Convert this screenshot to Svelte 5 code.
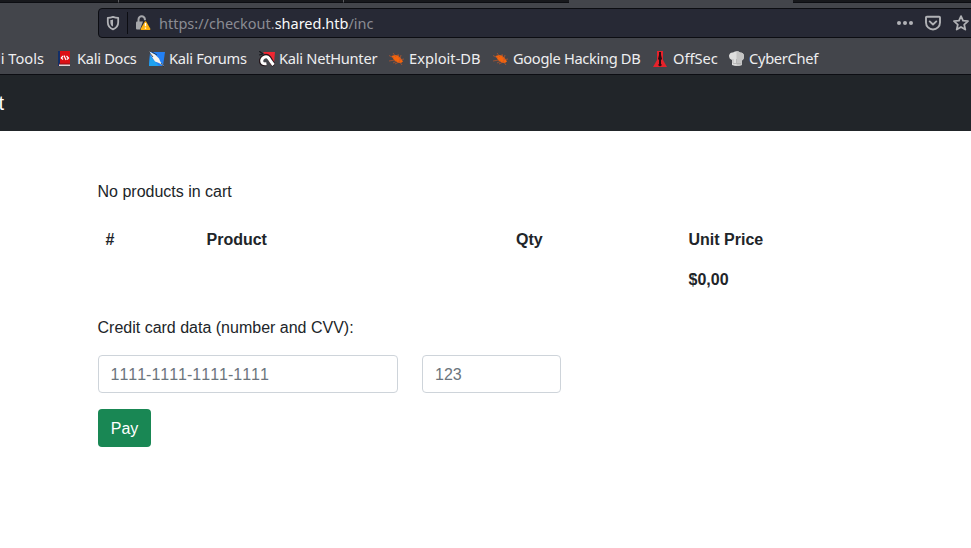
<script>
  const bookmarks = [
    { icon: 'docs', label: 'Kali Docs', width: 92, spacing: -0.3 },
    { icon: 'forums', label: 'Kali Forums', width: 110, spacing: -0.3 },
    { icon: 'hunter', label: 'Kali NetHunter', width: 130, spacing: -0.27 },
    { icon: 'bug', label: 'Exploit-DB', width: 104, spacing: 0 },
    { icon: 'bug', label: 'Google Hacking DB', width: 160, spacing: -0.34 },
    { icon: 'offsec', label: 'OffSec', width: 76, spacing: 0 },
    { icon: 'chef', label: 'CyberChef', width: 100, spacing: -0.3 }
  ];
</script>

<div class="window">
  <div class="tabs">
    <span class="tab first"></span>
    <span class="tab second"></span>
    <span class="tab third"></span>
    <span class="tab active"></span>
    <span class="tab rest"></span>
  </div>

  <div class="toolbar">
    <div class="urlbar">
      <svg class="shield" width="16" height="16" viewBox="0 0 16 16">
        <path d="M8 1.900C6.300 2.500 4.600 2.800 2.800 2.800v4.500c0 3.300 1.800 5.800 5.200 7 3.400-1.200 5.200-3.700 5.200-7V2.800C11.400 2.800 9.700 2.500 8 1.900Z" fill="none" stroke="#b1b2b6" stroke-width="1.800" stroke-linejoin="round" />
        <path d="M8 4.600v7C6.200 10.700 5.400 9.300 5.400 7.400V5.100Q6.800 5.100 8 4.600Z" fill="#b1b2b6" />
      </svg>
      <span class="divider"></span>
      <svg class="lock" width="16" height="16" viewBox="0 0 16 16">
        <path d="M3.500 8V4.500a3.200 3.200 0 0 1 6.400 0v.7" fill="none" stroke="#a6a7ab" stroke-width="2" />
        <path d="M2 6.500h6L5 14.500H2q-1 0-1-1v-6q0-1 1-1Z" fill="#a6a7ab" />
        <path d="M10.500 7 14.700 14.200H6.300Z" fill="#ffb310" stroke="#ffb310" stroke-width="1.500" stroke-linejoin="round" />
        <path d="M10.500 8v3.300M10.500 12.500v1.300" stroke="#fff" stroke-width="1.400" />
      </svg>
      <span class="url">https://checkout.<b>shared.htb</b>/inc</span>
      <svg class="dots" width="16" height="16" viewBox="0 0 16 16" fill="#b1b2b6">
        <circle cx="2" cy="8" r="2" /><circle cx="8" cy="8" r="2" /><circle cx="14" cy="8" r="2" />
      </svg>
      <svg class="pocket" width="16" height="16" viewBox="0 0 16 16" fill="none" stroke="#b1b2b6" stroke-width="1.900" stroke-linejoin="round" stroke-linecap="round">
        <path d="M1.900 1.700h12.200q.9 0 .9 .9v4.900a7 7 0 0 1-14 0V2.600q0-.9 .9-.9Z" />
        <path d="M4.700 6.400 8 9.500l3.300-3.100" />
      </svg>
      <svg class="star" width="16" height="16" viewBox="0 0 16 16" fill="none" stroke="#b1b2b6" stroke-width="1.800" stroke-linejoin="round">
        <path d="m8 1.100 2 4.600 5 .5-3.800 3.400 1.100 5L8 12l-4.300 2.600 1.100-5L1 6.200l5-.5Z" />
      </svg>
    </div>
  </div>

  <div class="bookmarks">
    <span class="cut">li Tools</span>
    {#each bookmarks as item}
      <span class="bookmark" style:width="{item.width}px">
        <svg width="16" height="16" viewBox="0 0 16 16">
          {#if item.icon === 'docs'}
            <path d="M1 0h2v15H1Z" fill="#132f68" />
            <path d="M3 0h10v13H3Z" fill="#dc1015" />
            <path d="M2 13h11v2H2Z" fill="#e4d7d8" />
            <path d="M2 13h11" stroke="#8b1018" />
            <path d="M6 5 4.300 7 6 8.500M9.500 5 11.500 7 10 8.500M7 4.500 9 9" fill="none" stroke="#fff" stroke-width="1.200" />
          {:else if item.icon === 'forums'}
            <path d="M1 1h15l-2 14H0Z" fill="#2380f4" />
            <path d="M1 5 10 15H0Z" fill="#20a2ee" />
            <path d="m0 .5 6 3 4 4 1.500 3.500 4 4.500-5.500-3.500-4-1.500-3-4.500Z" fill="#f4f3ed" />
            <path d="m0 1 4 5M3 1l5 3M12 12l3 4" fill="none" stroke="#252b34" stroke-width=".8" />
          {:else if item.icon === 'hunter'}
            <path d="M4 1h12l-1 11-3 2L8 6Z" fill="#f02732" />
            <path d="M0 0 4 3M0 4l4-1" stroke="#17191e" stroke-width="1.200" />
            <path d="M7.500 13C1 14 .5 9 4.500 6c3-2.500 6 0 7 3l3.500 5.500" fill="none" stroke="#25171c" stroke-width="4.200" />
            <path d="M7.500 12.700C2 13.500 1.500 9 4.800 6.500c3-2 5 0 6.200 2.700l3.500 4.800" fill="none" stroke="#fff" stroke-width="3" />
          {:else if item.icon === 'bug'}
            <path d="M2.500 5 6 4l3 .5 3 3 2 3-2 1.500-3-.3-4-2.700Z" fill="#f4640c" />
            <path d="M0 4.500 5 7M0 10l6-1M4 2l3 4M9 3l1 4M12 4l-1 4M15 8l-5 1M13 14l-3-4M4 12l4-2M6 13l4-2" stroke="#bd582b" stroke-width=".7" />
          {:else if item.icon === 'offsec'}
            <path d="M4 0h6v9l4 7H0l4-7Z" fill="#e5222b" />
            <path d="M6 1h2v3l1 4-1 1v4l1 1-2 1.500L5 14l1-1V9L5 8l1-4Z" fill="#250d10" />
          {:else}
            <path d="M3 14V9Q0 8 0 4.500 1 1 4 1.500 8-1 11 1.500q4 0 4 4 0 3-2 4V14Q8 16 3 14Z" fill="#dedede" />
            <path d="M7.500 0Q10 0 11 1.500q4 0 4 4 0 3-2 4V14l-5.500 1Z" fill="#c4c4c4" />
            <path d="M4 12.500h8M4 8v4M7.500 8v4" stroke="#aaa" stroke-width=".7" />
          {/if}
        </svg>
        <span class="label" style:letter-spacing="{item.spacing}px">{item.label}</span>
      </span>
    {/each}
  </div>

  <div class="navbar">t</div>

  <main>
    <p>No products in cart</p>
    <table>
      <thead>
        <tr><th>#</th><th>Product</th><th>Qty</th><th>Unit Price</th></tr>
      </thead>
      <tbody>
        <tr><th></th><th></th><th></th><th>$0,00</th></tr>
      </tbody>
    </table>
    <p class="card-label">Credit card data (number and CVV):</p>
    <div class="fields">
      <input class="number" placeholder="1111-1111-1111-1111" aria-label="Number" />
      <input class="cvv" placeholder="123" aria-label="CVV" />
    </div>
    <button>Pay</button>
  </main>
</div>

<style>
  :global(body) { margin: 0; background: #fff; }
  .window, .window * { box-sizing: border-box; }
  .window { width: 971px; height: 548px; overflow: hidden; background: #fff; font: 16px/24px "Liberation Sans", Arial, sans-serif; color: #212529; }
  svg { display: block; flex: none; }
  .tabs { display: flex; height: 3px; background: #17181c; }
  .tab { border-bottom: 1px solid #0c0d12; }
  .first { width: 119px; border-right: 1px solid #5b5c60; }
  .second { width: 225px; border-right: 1px solid #5b5c60; }
  .third { width: 225px; }
  .active { width: 224px; background: #43454b; border: 0; }
  .rest { flex: 1; }
  .toolbar { height: 35px; padding: 5px 0 0 98px; background: #43454b; }
  .urlbar { display: flex; align-items: center; width: 900px; height: 30px; border: 1px solid #0c0d12; border-radius: 4px; background: #272935; }
  .shield { margin-left: 6px; }
  .divider { width: 1px; height: 22px; margin: 0 7px 0 6px; background: #0c0d12; }
  .url { width: 738px; margin-left: 8px; font: 14.500px/20px "Noto Sans", sans-serif; color: #8b8c93; white-space: nowrap; }
  .url b { font-weight: 400; color: #f9f9fa; }
  .pocket, .star { margin-left: 12px; }
  .bookmarks { display: flex; align-items: center; height: 37px; padding-top: 5px; background: #43454b; border-bottom: 1px solid #0c0d12; font: 14.670px/20px "Noto Sans", sans-serif; color: #eeeef0; white-space: nowrap; }
  .cut { display: flex; flex: none; justify-content: flex-end; width: 57px; padding: 0 13px 2px 0; }
  .bookmark { display: flex; align-items: center; gap: 4px; flex: none; }
  .label { padding-bottom: 2px; }
  .navbar { height: 56px; padding-top: 16px; background: #212529; color: #fff; font-size: 20px; text-indent: -1.500px; }
  main { padding: 49px 98px 0; }
  p { margin: 0 0 0 -.5px; }
  table { width: 775.500px; margin: 16px 0 0 -.5px; border-collapse: collapse; table-layout: fixed; text-align: left; }
  th { height: 40px; padding: 8px; font-weight: 700; }
  th:nth-child(1) { width: 101px; }
  th:nth-child(2) { width: 309.500px; }
  th:nth-child(3) { width: 172.500px; }
  .card-label { margin-top: 16px; }
  .fields { display: flex; gap: 24px; margin-top: 15px; }
  input { height: 38px; padding: 8px 12px 6px; border: 1px solid #ced4da; border-radius: 4px; background: #fff; font: inherit; font-kerning: none; }
  input::placeholder { color: #6c757d; opacity: 1; }
  .number { width: 300px; padding-left: 11.500px; }
  .cvv { width: 139px; }
  button { display: block; width: 53px; height: 38px; margin-top: 16px; padding: 2px 0 0; border: 0; border-radius: 4px; background: #198754; color: #fff; font: inherit; }
</style>
